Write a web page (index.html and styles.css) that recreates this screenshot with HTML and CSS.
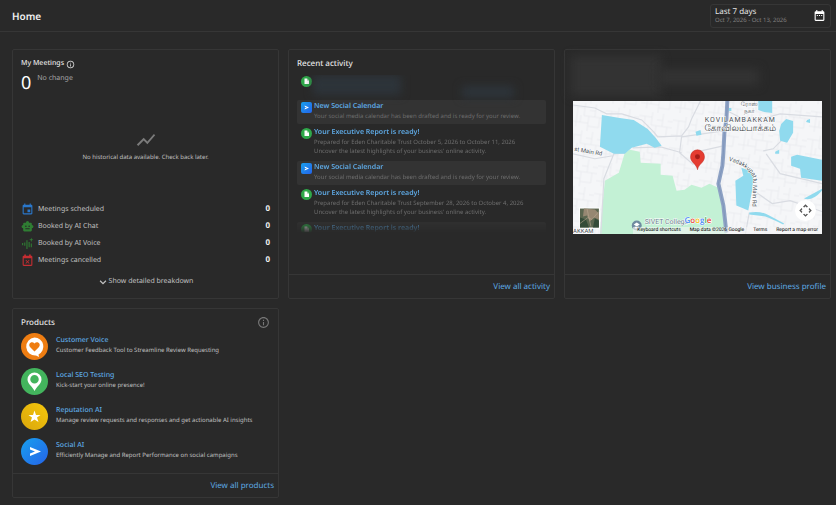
FILE: index.html
```html
<!DOCTYPE html>
<html lang="en">
<head>
<meta charset="utf-8">
<title>Home</title>
<link rel="stylesheet" href="styles.css">
</head>
<body>
<svg class="defs" width="0" height="0" aria-hidden="true">
  <defs>
    <linearGradient id="blue" x1="0" y1="0" x2="1" y2="1"><stop offset="0" stop-color="#18a0ee"/><stop offset="1" stop-color="#2563e8"/></linearGradient>
    <linearGradient id="gold" x1="1" y1="0" x2="0" y2="1"><stop offset="0" stop-color="#f5c70c"/><stop offset="1" stop-color="#d9a60c"/></linearGradient>
    <symbol id="report" viewBox="0 0 22 22"><circle cx="11" cy="11" r="11" fill="#2fa84a"/><path fill="#fff" d="M7 5h5l4 4v7H7z"/><path fill="#8fd39e" d="M12 5v4h4z"/></symbol>
    <symbol id="social" viewBox="0 0 22 22"><rect width="22" height="22" rx="4" fill="url(#blue)"/><path fill="#fff" d="M7 7l9 4-9 4 1-3 4-1-4-1z"/></symbol>
    <symbol id="info" viewBox="0 0 24 24"><path d="M11 7h2v2h-2zm0 4h2v6h-2zm1-9C6.480 2 2 6.480 2 12s4.480 10 10 10 10-4.480 10-10S17.520 2 12 2zm0 18c-4.410 0-8-3.590-8-8s3.590-8 8-8 8 3.590 8 8-3.590 8-8 8z"/></symbol>
  </defs>
</svg>
<header class="topbar">
  <h1>Home</h1>
  <button class="range" type="button">
    <span class="range-text"><span class="range-name">Last 7 days</span><span class="range-dates">Oct 7, 2026 - Oct 13, 2026</span></span>
    <svg class="range-icon" viewBox="0 0 24 24" aria-hidden="true"><path d="M9 11H7v2h2zm4 0h-2v2h2zm4 0h-2v2h2zm2-7h-1V2h-2v2H8V2H6v2H5a2 2 0 0 0-2 2v14c0 1.100.900 2 2 2h14c1.100 0 2-.900 2-2V6c0-1.100-.900-2-2-2zm0 16H5V9h14z"/></svg>
  </button>
</header>
<main class="grid">
  <section class="card meetings">
    <h2 class="meet-title">My Meetings <svg viewBox="0 0 24 24" aria-hidden="true"><use href="#info"/></svg></h2>
    <div class="score"><strong>0</strong><span>No change</span></div>
    <div class="empty">
      <svg viewBox="0 0 24 24" aria-hidden="true"><path d="M3.500 18.500l6-6 4 4L22 6.900 20.600 5.500l-7.100 8-4-4L2 17z"/></svg>
      <p>No historical data available. Check back later.</p>
    </div>
    <dl class="stats">
      <div><dt><svg class="c-blue" viewBox="0 0 24 24" aria-hidden="true"><path d="M17 12h-5v5h5zM16 1v2H8V1H6v2H5a2 2 0 0 0-2 2v14c0 1.100.900 2 2 2h14c1.100 0 2-.900 2-2V5c0-1.100-.900-2-2-2h-1V1zm3 18H5V8h14z"/></svg>Meetings scheduled</dt><dd>0</dd></div>
      <div><dt><svg class="c-green" viewBox="0 0 24 24" aria-hidden="true"><path fill-rule="evenodd" d="M20 9V7a2 2 0 0 0-2-2h-3a3 3 0 0 0-6 0H6a2 2 0 0 0-2 2v2a3 3 0 0 0 0 6v4a2 2 0 0 0 2 2h12a2 2 0 0 0 2-2v-4a3 3 0 0 0 0-6zM7.500 11.500a1.500 1.500 0 1 1 3 0 1.500 1.500 0 0 1-3 0zM16 17H8v-2h8zm-1-4a1.500 1.500 0 1 1 0-3 1.500 1.500 0 0 1 0 3z"/></svg>Booked by AI Chat</dt><dd>0</dd></div>
      <div><dt><svg class="c-green" viewBox="0 0 24 24" aria-hidden="true"><path d="M2 11h2v4H2zm4-1h2v6H6zm4-4h2v16h-2zm4 3h2v10h-2zm4 3h2v7h-2zM19 1l1 3 3 1-3 1-1 3-1-3-3-1 3-1z"/></svg>Booked by AI Voice</dt><dd>0</dd></div>
      <div><dt><svg class="c-red" viewBox="0 0 24 24" aria-hidden="true"><path d="M9.300 18l2.700-2.700 2.700 2.700 1-1-2.700-2.700 2.700-2.700-1-1-2.700 2.700-2.700-2.700-1 1 2.700 2.700-2.700 2.700zM19 3h-1V1h-3v2H9V1H6v2H5a2 2 0 0 0-2 2v15c0 1.100.900 2 2 2h14c1.100 0 2-.900 2-2V5c0-1.100-.900-2-2-2zm0 17H5V8h14z"/></svg>Meetings cancelled</dt><dd>0</dd></div>
    </dl>
    <button class="more" type="button"><svg viewBox="0 0 24 24" aria-hidden="true"><path d="M6 8l6 6 6-6 2 2-8 8-8-8z"/></svg>Show detailed breakdown</button>
  </section>

  <section class="card activity">
    <h2>Recent activity</h2>
    <ul class="feed">
      <li class="redacted"><svg class="badge"><use href="#report"/></svg><i class="smudge smudge-a"></i><i class="smudge smudge-b"></i></li>
      <li class="shade"><svg class="badge"><use href="#social"/></svg><div><a href="#">New Social Calendar</a><p>Your social media calendar has been drafted and is ready for your review.</p></div></li>
      <li><svg class="badge"><use href="#report"/></svg><div><a href="#">Your Executive Report is ready!</a><p>Prepared for Eden Charitable Trust October 5, 2026 to October 11, 2026</p><p>Uncover the latest highlights of your business' online activity.</p></div></li>
      <li class="shade"><svg class="badge"><use href="#social"/></svg><div><a href="#">New Social Calendar</a><p>Your social media calendar has been drafted and is ready for your review.</p></div></li>
      <li><svg class="badge"><use href="#report"/></svg><div><a href="#">Your Executive Report is ready!</a><p>Prepared for Eden Charitable Trust September 28, 2026 to October 4, 2026</p><p>Uncover the latest highlights of your business' online activity.</p></div></li>
      <li class="shade"><svg class="badge"><use href="#report"/></svg><div><a href="#">Your Executive Report is ready!</a></div></li>
    </ul>
    <footer><a href="#">View all activity</a></footer>
  </section>

  <section class="card profile">
    <div class="masked"><i class="haze haze-a"></i><i class="haze haze-b"></i></div>
    <div class="map">
      <svg class="map-art" viewBox="0 0 250 134" aria-hidden="true">
        <defs>
          <pattern id="streets" width="34" height="28" patternUnits="userSpaceOnUse" patternTransform="rotate(8)">
            <path d="M0 5h13v8h21M6 5v20M0 20h18v-7M18 20v8M24 0v13M29 13v10h-11M13 0v5M10 13v7M29 7h5M24 7h-6" fill="none" stroke="#e6e8ec" stroke-width=".7"/>
          </pattern>
        </defs>
        <rect width="250" height="134" fill="#f5f6f8"/>
        <rect width="250" height="134" fill="url(#streets)"/>
        <path fill="#c3f1d5" d="M52 52l5-3 10 2 1 11 20 1v11l12 1 4 15 8-1 7-5 10 3 8-4 9 4 9 45-2 2H27l3-34 2-20 14-8z"/>
        <g fill="none" stroke="#d9dce2" stroke-width="1.200">
          <path d="M0 4l22 3 12 6h15l20 6 12 12 4 5 24-1 7-9 3-8 9-18M109 36l-2 16 14 12M60 47l28-1 14 4 7 2M28 134l3-56 10-25 12-1M109 36l42-6M191 50l10-2 12-12M155 10l22 11 31-8 42 3M151 45l-27 6M180 89l20 14 18-3 32 11M177 112l-4 22M194 53l14 20 42 10M0 53l22 5 18-3"/>
        </g>
        <g fill="#90daee">
          <path d="M29 14l18 3 14 2 14 9 8 9 6 8-7 2-8-4-15 4-7 6-11 0-14-7zM186 0h14v12l-8-1-6-2zM209 23l5-5 7 2v12l-6 10-7-2-1-10zM219 56l6-2 25 5v21l-21-3-1-9-9-3zM169 67l9 3 3 6-1 13-4 21-12-5-1-25 8-5zM123 31l5-2 1 5-5 1zM235 19l3-1v4l-4-1zM203 51l4-2v4h-4zM156 7h3v3h-3z"/>
          <path d="M177 112q12-2 20 3l15 8-1 1q-12-6-18-8l-16-2zM232 98l18-10v2q-10 11-18 8z"/>
        </g>
        <path d="M155-1l-1 20-2 13-1 20-1 13-4 18 5 22 3 27" fill="none" stroke="#8ea2c4" stroke-width="4"/>
        <path d="M155-1l-1 20-2 13-1 20-1 13-4 18 5 22 3 27" fill="none" stroke="#7b91b8" stroke-width=".7"/>
        <g class="map-label">
          <text x="177" y="5" font-size="6" text-anchor="middle">ரோஸ்</text>
          <text x="177" y="12" font-size="6" text-anchor="middle">நகர்</text>
          <text x="168" y="21" font-size="7" text-anchor="middle" class="spaced">KOVILAMBAKKAM</text>
          <text x="168" y="30" font-size="9" text-anchor="middle" class="tamil">கோவிலம்பாக்கம்</text>
          <text x="1" y="50" font-size="6" transform="rotate(10 1 50)">st Main Rd</text>
          <path id="road" d="M156 60q22 6 25 18l-1 30" fill="none" stroke="none"/>
          <text font-size="6"><textPath href="#road">Vadakkupattu Main Rd</textPath></text>
          <text x="0" y="133" font-size="6">AKKAM</text>
          <text x="72" y="124" font-size="7" class="college">SIVET College</text>
        </g>
        <circle cx="64" cy="125" r="5" fill="#6f8ba0"/><path d="M61 124l3-2 3 2-3 2zM62 126q2 1 4 0v2h-4z" fill="#fff"/>
        <path fill="#e53c31" stroke="#b92b22" stroke-width=".5" d="M125 69c-1-6-7-7-7-13a7 7 0 0 1 14 0c0 6-6 7-7 13z"/><circle cx="125" cy="56" r="2.500" fill="#a51d18"/>
        <rect x="6" y="107" width="21" height="21" fill="#fff"/><rect x="7" y="108" width="19" height="19" fill="#5b6650"/>
        <path fill="#968772" d="M11 108l11 1 4 4v6l-5-2-4 4-3-6-4 1z"/><path fill="#344b38" d="M7 117l6 2 3 8H7zM22 118l4 2v7h-6z"/><path d="M7 123l8-6 4 2 7-8M14 108l4 18" stroke="#b8a590" stroke-width=".6" fill="none"/>
        <text x="112" y="123" font-size="8" class="brand"><tspan fill="#4285f4">G</tspan><tspan fill="#ea4335">o</tspan><tspan fill="#fbbc04">o</tspan><tspan fill="#4285f4">g</tspan><tspan fill="#34a853">l</tspan><tspan fill="#ea4335">e</tspan></text>
      </svg>
      <button class="pan" type="button" aria-label="Map camera controls"><svg viewBox="0 0 24 24" aria-hidden="true"><path d="M12 2l4 4-2 1-2-2-2 2-2-1zm0 20l4-4-2-1-2 2-2-2-2 1zM2 12l4-4 1 2-2 2 2 2-1 2zm20 0l-4-4-1 2 2 2-2 2 1 2z"/></svg></button>
      <div class="map-legal"><button type="button">Keyboard shortcuts</button><span>Map data ©2026 Google</span><a href="#">Terms</a><a href="#">Report a map error</a></div>
    </div>
    <footer><a href="#">View business profile</a></footer>
  </section>

  <section class="card products">
    <div class="product-head"><h2>Products</h2><svg viewBox="0 0 24 24" aria-hidden="true"><use href="#info"/></svg></div>
    <ul class="product-list">
      <li><svg viewBox="0 0 54 54" aria-hidden="true"><circle cx="27" cy="27" r="27" fill="#ee7d12"/><path fill="#fff" d="M27 9a18 18 0 1 0 3 36l6 3-1-5a18 18 0 0 0-8-34z"/><path fill="#ee7d12" d="M27 37l-9-9c-5-7 4-13 9-7 5-6 14 0 9 7z"/></svg><div><a href="#">Customer Voice</a><p>Customer Feedback Tool to Streamline Review Requesting</p></div></li>
      <li><svg viewBox="0 0 54 54" aria-hidden="true"><circle cx="27" cy="27" r="27" fill="#43b45d"/><path fill="#fff" fill-rule="evenodd" d="M27 46C23 37 13 32 13 23a14 14 0 0 1 28 0c0 9-10 14-14 23zm0-32a8.500 8.500 0 1 0 0 17 8.500 8.500 0 0 0 0-17z"/></svg><div><a href="#">Local SEO Testing</a><p>Kick-start your online presence!</p></div></li>
      <li><svg viewBox="0 0 54 54" aria-hidden="true"><circle cx="27" cy="27" r="27" fill="url(#gold)"/><path fill="#fff" d="M27 15l3 9h9l-7 5 3 9-8-5-8 5 3-9-7-5h9z"/></svg><div><a href="#">Reputation AI</a><p>Manage review requests and responses and get actionable AI insights</p></div></li>
      <li><svg viewBox="0 0 54 54" aria-hidden="true"><circle cx="27" cy="27" r="27" fill="url(#blue)"/><path fill="#fff" d="M18 18l22 9-22 9v-5l10-4-10-4z"/></svg><div><a href="#">Social AI</a><p>Efficiently Manage and Report Performance on social campaigns</p></div></li>
    </ul>
    <footer><a href="#">View all products</a></footer>
  </section>
</main>
</body>
</html>
```
FILE: styles.css
```css
* { box-sizing: border-box; }
html { background: #292929; }
body { margin: 0; font-family: "Noto Sans", sans-serif; font-size: 7px; line-height: 12px; color: #c0c0c0; background: #292929; text-rendering: geometricPrecision; }
h1, h2, p, ul, dl, dd { margin: 0; padding: 0; }
ul { list-style: none; }
a { color: #5ea9e4; text-decoration: none; }
button { font: inherit; color: inherit; background: none; border: 0; padding: 0; cursor: pointer; text-rendering: inherit; }
svg { display: block; flex: none; fill: currentColor; }
.defs { position: absolute; }

.topbar { display: flex; align-items: center; justify-content: space-between; height: 32px; padding: 0 5px 0 12px; border-bottom: 1px solid #363636; }
h1 { font-size: 10px; font-weight: 600; color: #f0f0f0; }
.range { display: flex; align-items: center; justify-content: space-between; width: 121px; height: 24px; padding: 0 4px; border: 1px solid #363636; border-radius: 3px; text-align: left; }
.range-text { display: flex; flex-direction: column; line-height: 9px; }
.range-name { font-size: 8px; color: #e6e6e6; }
.range-dates { font-size: 6px; color: #808080; }
.range-icon { width: 13px; height: 13px; color: #fff; }

.grid { display: grid; grid-template-columns: repeat(3, minmax(0, 1fr)); gap: 9px; padding: 17px 5px 7px 12px; }
.card { display: flex; flex-direction: column; border: 1px solid #363636; border-radius: 2px; min-height: 190px; }
h2 { font-size: 8px; font-weight: 500; color: #e6e6e6; line-height: 12px; }
.card footer { display: flex; justify-content: flex-end; align-items: center; height: 24px; padding: 0 4px; margin-top: auto; border-top: 1px solid #363636; }
footer a { font-size: 8px; }

.meetings { padding: 8px; min-height: 250px; }
.meet-title { display: flex; align-items: center; gap: 2px; font-size: 7px; }
.meet-title svg { width: 9px; height: 9px; }
.score { display: flex; gap: 6px; margin-top: 2px; }
.score strong { font-size: 18px; line-height: 22px; font-weight: 400; color: #fff; }
.score span { line-height: 14px; color: #a5a5a5; }
.empty { display: flex; flex-direction: column; align-items: center; padding: 35px 0 0; font-size: 6px; }
.empty svg { width: 22px; height: 22px; color: #7b7b7b; }
.stats { margin-top: auto; }
.stats div { display: flex; justify-content: space-between; height: 17px; }
.stats dt { display: flex; align-items: center; gap: 4px; }
.stats svg { width: 13px; height: 13px; }
.stats dd { font-size: 8px; font-weight: 700; color: #eee; line-height: 15px; }
.c-blue { color: #2a77cb; }
.c-green { color: #2f7d33; }
.c-red { color: #c62d32; }
.more { display: flex; align-items: center; justify-content: center; gap: 1px; margin: 7px 0 2px; }
.more svg { width: 10px; height: 10px; }

.activity h2 { padding: 8px 8px 0; }
.feed { height: 158px; margin: 5px 8px 0; overflow: hidden; -webkit-mask-image: linear-gradient(#000 90%, transparent); mask-image: linear-gradient(#000 90%, transparent); }
.feed li { display: flex; gap: 2px; padding: 4px 4px 5px; }
.feed .shade { background: #333; border-radius: 2px; padding: 2px 4px 3px; }
.feed .redacted { position: relative; height: 25px; padding-top: 1px; }
.badge { width: 11px; height: 11px; }
.feed a { display: block; font-weight: 600; line-height: 10px; }
.feed p { font-size: 6px; line-height: 9px; color: #6e6e6e; white-space: nowrap; }
.smudge { position: absolute; background: #2d343a; filter: blur(4px); }
.smudge-a { left: 16px; top: 0; width: 88px; height: 20px; }
.smudge-b { right: 32px; bottom: 2px; width: 52px; height: 12px; }

.masked { position: relative; height: 51px; }
.haze { position: absolute; background: #333; filter: blur(5px); }
.haze-a { left: 6px; top: 6px; width: 90px; height: 40px; }
.haze-b { left: 94px; top: 19px; width: 100px; height: 16px; }
.map { position: relative; margin: 0 8px; }
.map-art { width: 100%; height: auto; overflow: hidden; }
.map-label { font-family: Roboto, sans-serif; fill: #4b5258; paint-order: stroke; stroke: #fff; stroke-width: 1px; }
.spaced { letter-spacing: 1px; }
.tamil { fill: #33383d; }
.college { fill: #697f8a; }
.brand { font-family: "Open Sans", sans-serif; font-weight: 600; paint-order: stroke; stroke: #fff; stroke-width: 1px; }
.pan { position: absolute; right: 6px; bottom: 13px; width: 21px; height: 21px; border-radius: 50%; background: #fff; color: #555; display: grid; place-items: center; }
.pan svg { width: 15px; height: 15px; }
.map-legal { position: absolute; right: 0; bottom: 0; display: flex; gap: 9px; padding: 0 4px; font-family: Roboto, sans-serif; font-size: 5px; line-height: 7px; color: #000; background: rgba(245, 245, 245, .6); white-space: nowrap; }
.map-legal a { font-size: 5px; color: #000; }

.products { min-height: 190px; }
.product-head { display: flex; justify-content: space-between; align-items: center; padding: 7px 8px 1px; }
.product-head svg { width: 13px; height: 13px; color: #777; }
.product-list { display: grid; gap: 8px; padding: 3px 8px 8px; }
.product-list li { display: flex; gap: 8px; }
.product-list svg { width: 27px; height: 27px; }
.product-list div { padding-top: 3px; }
.product-list a { display: block; line-height: 10px; font-weight: 500; }
.product-list p { font-size: 6px; line-height: 9px; white-space: nowrap; }
```
